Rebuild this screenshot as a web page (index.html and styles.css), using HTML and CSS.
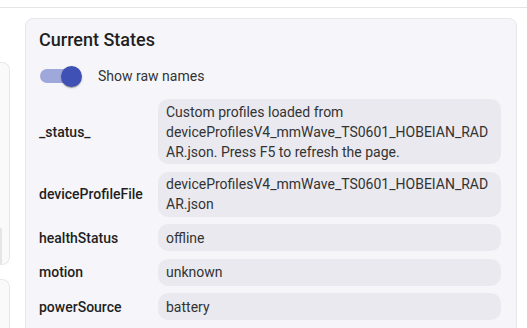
FILE: index.html
```html
<!DOCTYPE html>
<html lang="en">
<head>
    <meta charset="UTF-8">
    <meta name="viewport" content="width=device-width, initial-scale=1.0">
    <title>Current States</title>
    <link rel="stylesheet" href="styles.css">
</head>
<body>
    <div class="topbar"></div>

    <div class="page">
        <aside class="side">
            <div class="side-card side-card-first">
                <div class="side-button"></div>
            </div>
            <div class="side-card side-card-second"></div>
        </aside>

        <section class="card">
            <h2 class="card-title">Current States</h2>

            <label class="toggle-row">
                <span class="switch">
                    <span class="switch-track"></span>
                    <span class="switch-thumb"></span>
                </span>
                <span class="toggle-label">Show raw names</span>
            </label>

            <div class="states">
                <div class="state-row">
                    <span class="state-name">_status_</span>
                    <span class="state-value">Custom profiles loaded from deviceProfilesV4_mmWave_TS0601_HOBEIAN_RADAR.json. Press F5 to refresh the page.</span>
                </div>
                <div class="state-row">
                    <span class="state-name">deviceProfileFile</span>
                    <span class="state-value">deviceProfilesV4_mmWave_TS0601_HOBEIAN_RADAR.json</span>
                </div>
                <div class="state-row">
                    <span class="state-name">healthStatus</span>
                    <span class="state-value">offline</span>
                </div>
                <div class="state-row">
                    <span class="state-name">motion</span>
                    <span class="state-value">unknown</span>
                </div>
                <div class="state-row">
                    <span class="state-name">powerSource</span>
                    <span class="state-value">battery</span>
                </div>
            </div>
        </section>
    </div>
</body>
</html>
```

FILE: styles.css
```css
/* Reset */
* {
    margin: 0;
    padding: 0;
    box-sizing: border-box;
}

body {
    font-family: Roboto, "Liberation Sans", Arial, sans-serif;
    background: #ffffff;
    color: #333333;
    height: 100vh;
    overflow: hidden;
}

/* Top bar line */
.topbar {
    height: 8px;
    border-bottom: 1px solid #e4e4e8;
}

/* Page layout */
.page {
    display: flex;
    gap: 15px;
    padding-top: 10px;
    height: 320px;
    overflow: hidden;
}

/* Left column (cut off) */
.side {
    width: 10px;
    flex-shrink: 0;
    display: flex;
    flex-direction: column;
}

.side-card {
    background: #fafafa;
    border: 1px solid #e8e8ec;
    border-left: none;
    border-radius: 0 8px 8px 0;
}

.side-card-first {
    margin-top: 44px;
    height: 210px;
    padding-top: 165px;
}

.side-card-second {
    margin-top: 14px;
    height: 60px;
    flex-shrink: 0;
}

.side-button {
    width: 2px;
    height: 36px;
    background: #e6e6e9;
}

/* Main card */
.card {
    width: 492px;
    height: 340px;
    flex-shrink: 0;
    background: #f6f6fa;
    border: 1px solid #e6e6ec;
    border-radius: 8px;
    padding: 9px 15px 0 13px;
}

.card-title {
    font-size: 18px;
    font-weight: 500;
    line-height: 24px;
    color: #1f1f1f;
}

/* Toggle */
.toggle-row {
    display: flex;
    align-items: center;
    height: 28px;
    margin-top: 10px;
    padding-left: 1px;
}

.switch {
    position: relative;
    width: 42px;
    height: 20px;
    margin-right: 16px;
}

.switch-track {
    position: absolute;
    left: 0;
    top: 3px;
    width: 36px;
    height: 14px;
    border-radius: 7px;
    background: #9fa8da;
}

.switch-thumb {
    position: absolute;
    left: 21px;
    top: 0;
    width: 21px;
    height: 21px;
    border-radius: 50%;
    background: #3f51b5;
    box-shadow: 0 2px 1px -1px rgba(0, 0, 0, 0.2), 0 1px 1px 0 rgba(0, 0, 0, 0.14), 0 1px 3px 0 rgba(0, 0, 0, 0.12);
}

.toggle-label {
    font-size: 14px;
    color: #333333;
}

/* States list */
.states {
    display: flex;
    flex-direction: column;
    gap: 7.5px;
    margin-top: 9px;
}

.state-row {
    display: flex;
    align-items: center;
}

.state-name {
    width: 119px;
    flex-shrink: 0;
    font-size: 14px;
    font-weight: 500;
    color: #1f1f1f;
}

.state-value {
    flex: 1;
    display: flex;
    align-items: center;
    min-height: 27px;
    padding: 2.5px 8px;
    border-radius: 10px;
    background: #e9e9ef;
    font-size: 14px;
    line-height: 20px;
    color: #333333;
    overflow-wrap: anywhere;
}
```
